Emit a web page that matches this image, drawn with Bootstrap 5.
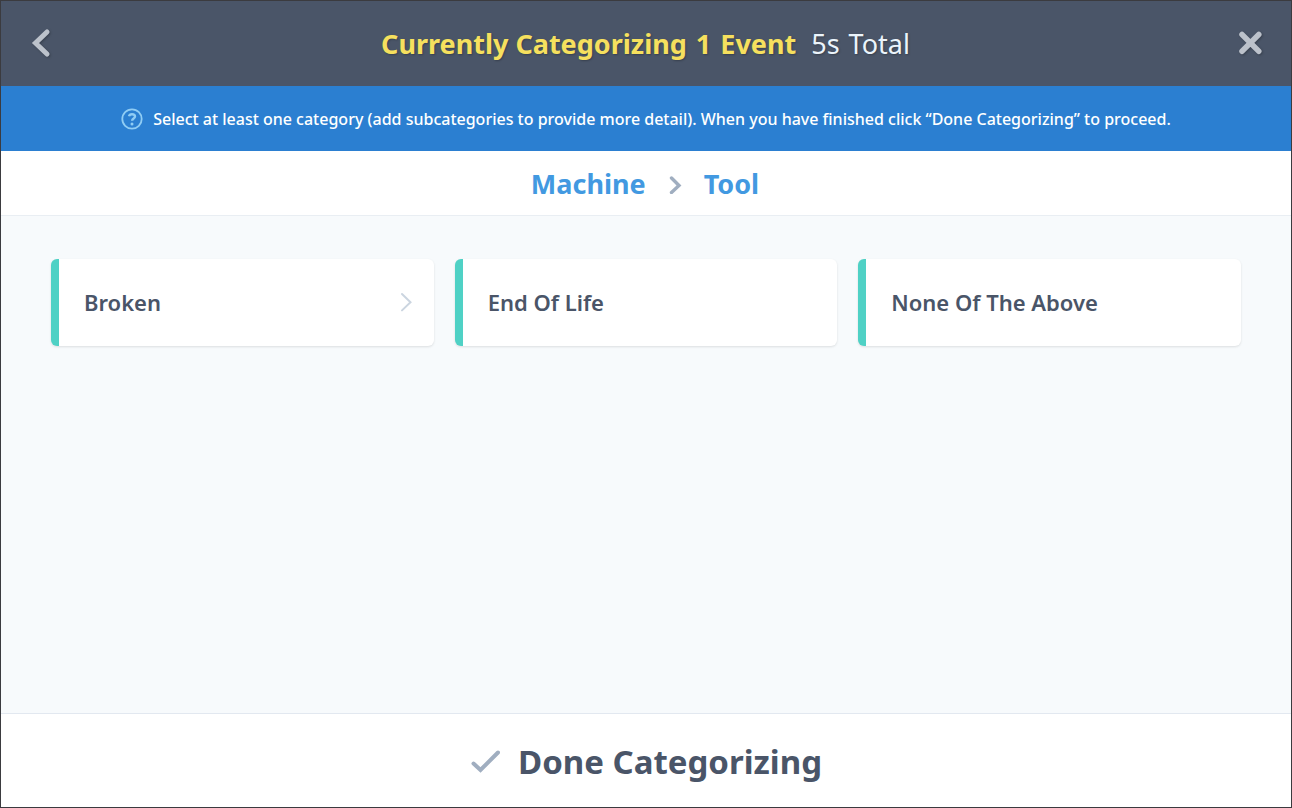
<!DOCTYPE html>
<html lang="en">
<head>
<meta charset="utf-8">
<meta name="viewport" content="width=device-width, initial-scale=1">
<title>Categorize events</title>
<link href="https://cdn.jsdelivr.net/npm/bootstrap@5.3.0/dist/css/bootstrap.min.css" rel="stylesheet">
<style>
  body { font-family: "Noto Sans", sans-serif; color: #4a5568; background: #f7fafc; border: 1px solid #3b3b3f; }
  .top-bar { background: #4a5568; padding: 22px 28px 22px 27px; text-shadow: 1px 1px 2px rgba(0,0,0,.25); }
  .top-bar h1 { font-size: 27px; line-height: 41px; color: #f6e05e; column-gap: 9px; }
  .top-bar .total { color: #ebf4fb; margin-left: 6px; column-gap: 9px; }
  .icon-btn { width: 26px; height: 38px; color: #bcc2cb; filter: drop-shadow(1px 1px 1px rgba(0,0,0,.25)); }
  .hint { background: #2b7fd1; font-size: 16px; line-height: 25px; font-weight: 500; padding: 21px 16px 19px; gap: 10px; }
  .hint svg { color: #90cdf4; }
  .trail { border-bottom: 1px solid #e9eef3; font-size: 27px; line-height: 40px; padding: 13px 18px 11px 16px; gap: 22px; }
  .trail a { color: #4299e1; }
  .choices { padding: 43px 50px; }
  .choices .row { --bs-gutter-x: 21px; --bs-gutter-y: 21px; }
  .choice { color: #4a5568; background: #fff; border: 0; border-left: 8px solid #4fd1c5; border-radius: 6px; box-shadow: 0 1px 3px rgba(0,0,0,.08), 0 1px 2px rgba(0,0,0,.04); font-size: 22px; line-height: 32px; padding: 27px 22px 28px 25px; }
  .done-bar { border-top: 1px solid #e2e8f0; }
  .done-btn { color: #4a5568; font-size: 33px; line-height: 48px; padding: 24px 16px 21px; gap: 18px; }
</style>
</head>
<body class="d-flex flex-column min-vh-100">
  <header class="top-bar d-flex align-items-start justify-content-between">
    <button type="button" class="icon-btn btn p-0 border-0 d-flex align-items-center justify-content-start" aria-label="Back">
      <svg width="26" height="34" viewBox="0 0 26 34" fill="none" stroke="currentColor" stroke-width="5" stroke-linecap="round"><path d="M19 7 7.500 18 19 29"/></svg>
    </button>
    <h1 class="m-0 fw-bold d-flex flex-wrap justify-content-center"><span>Currently Categorizing</span> <span>1</span> <span>Event</span> <span class="total fw-normal d-flex"><span>5s</span> <span>Total</span></span></h1>
    <button type="button" class="icon-btn btn p-0 border-0 d-flex align-items-center justify-content-center" aria-label="Close">
      <svg width="26" height="26" viewBox="0 0 26 26" fill="none" stroke="currentColor" stroke-width="5.500" stroke-linecap="round"><path d="m5 5.500 16.800 16.800m0-16.800L5 22.300"/></svg>
    </button>
  </header>
  <div class="hint d-flex align-items-center justify-content-center text-white">
    <svg class="flex-shrink-0" width="22" height="24" viewBox="0 0 22 24" fill="none" stroke="currentColor" aria-hidden="true"><circle cx="11" cy="11" r="9.700" stroke-width="1.800"/><path d="M8 8.300C8.300 7 9.400 6.200 11 6.200c1.800 0 3 .9 3 2.300 0 2-2.900 2-2.900 4.200" stroke-width="2.400"/><circle cx="11" cy="15.900" r="1.500" fill="currentColor" stroke="none"/></svg>
    <span>Select at least one category (add subcategories to provide more detail). When you have finished click “Done Categorizing” to proceed.</span>
  </div>
  <nav class="trail bg-white d-flex align-items-center justify-content-center fw-bold" aria-label="Category path">
    <a href="#machine" class="text-decoration-none">Machine</a>
    <svg width="14" height="20" viewBox="0 0 14 20" fill="none" stroke="#a0aec0" stroke-width="3.400" stroke-linecap="round" aria-hidden="true"><path d="m3.500 4 7.500 7.500-7.500 7"/></svg>
    <a href="#tool" class="text-decoration-none">Tool</a>
  </nav>
  <main class="choices flex-grow-1">
    <div class="row row-cols-1 row-cols-md-3">
      <div class="col"><button type="button" class="choice w-100 h-100 d-flex align-items-center justify-content-between fw-semibold text-start">Broken
        <svg width="12" height="20" viewBox="0 0 12 20" fill="none" stroke="#cbd5e0" stroke-width="2" stroke-linecap="round" aria-hidden="true"><path d="m2 2 8.500 8.200L2 18.400"/></svg></button></div>
      <div class="col"><button type="button" class="choice w-100 h-100 d-flex align-items-center fw-semibold text-start">End Of Life</button></div>
      <div class="col"><button type="button" class="choice w-100 h-100 d-flex align-items-center fw-semibold text-start">None Of The Above</button></div>
    </div>
  </main>
  <footer class="done-bar bg-white">
    <button type="button" class="done-btn btn w-100 border-0 rounded-0 d-flex align-items-center justify-content-center fw-bold">
      <svg width="30" height="24" viewBox="0 0 30 24" fill="none" stroke="#a0aec0" stroke-width="4" stroke-linecap="round" aria-hidden="true"><path d="m3.500 13.500 7 6.500L28 2.500"/></svg>
      Done Categorizing
    </button>
  </footer>
<script src="https://cdn.jsdelivr.net/npm/bootstrap@5.3.0/dist/js/bootstrap.bundle.min.js"></script>
</body>
</html>
